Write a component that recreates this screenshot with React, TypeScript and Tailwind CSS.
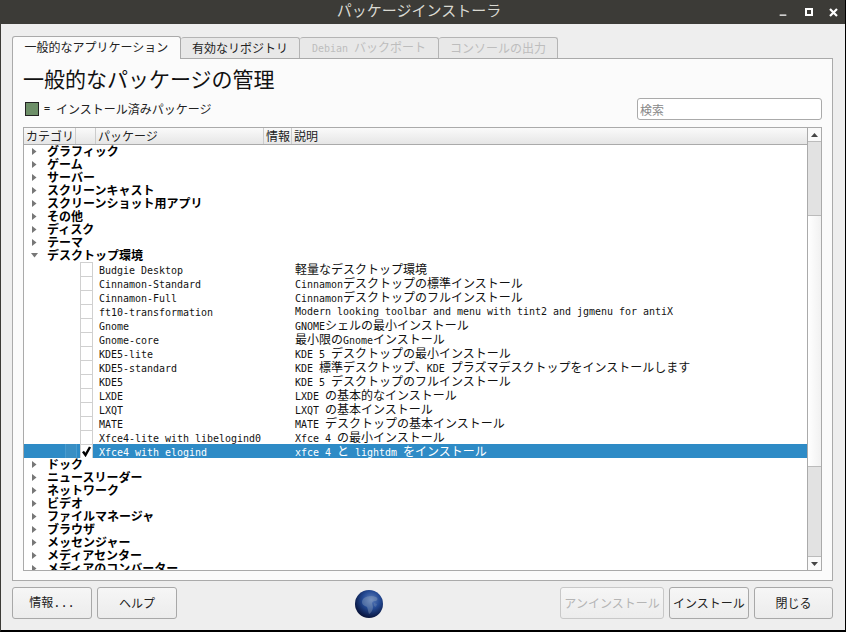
import { Minus } from 'lucide-react';

const FONT = "font-['DejaVu_Sans_Mono','Noto_Sans_CJK_JP',monospace]";

const before = ['グラフィック', 'ゲーム', 'サーバー', 'スクリーンキャスト', 'スクリーンショット用アプリ', 'その他', 'ディスク', 'テーマ'];
const after = ['ドック', 'ニュースリーダー', 'ネットワーク', 'ビデオ', 'ファイルマネージャ', 'ブラウザ', 'メッセンジャー', 'メディアセンター', 'メディアのコンバーター'];

const packages = [
  ['Budgie Desktop', '軽量なデスクトップ環境'],
  ['Cinnamon-Standard', 'Cinnamonデスクトップの標準インストール'],
  ['Cinnamon-Full', 'Cinnamonデスクトップのフルインストール'],
  ['ft10-transformation', 'Modern looking toolbar and menu with tint2 and jgmenu for antiX'],
  ['Gnome', 'GNOMEシェルの最小インストール'],
  ['Gnome-core', '最小限のGnomeインストール'],
  ['KDE5-lite', 'KDE 5 デスクトップの最小インストール'],
  ['KDE5-standard', 'KDE 標準デスクトップ、KDE プラズマデスクトップをインストールします'],
  ['KDE5', 'KDE 5 デスクトップのフルインストール'],
  ['LXDE', 'LXDE の基本的なインストール'],
  ['LXQT', 'LXQT の基本インストール'],
  ['MATE', 'MATE デスクトップの基本インストール'],
  ['Xfce4-lite with libelogind0', 'Xfce 4 の最小インストール'],
];

// latin runs are 10px mono, japanese runs 12px
function Mixed({ text }: { text: string }) {
  const parts = text.split(/([\u3000-\u30ff\u4e00-\u9fff]+)/);
  return (
    <>
      {parts.map((p, i) =>
        i % 2 === 1 ? <span key={i} className="text-[12px]">{p}</span> : <span key={i} className="text-[9.97px]">{p}</span>
      )}
    </>
  );
}

function Category({ name, open }: { name: string; open?: boolean }) {
  return (
    <div className="flex h-[13px] shrink-0 items-center">
      <div className="mr-[3px] flex w-[20px] justify-center">
        {open ? (
          <svg width="9" height="5" viewBox="0 0 9 5"><path d="M1 0h7L4.500 4.500z" fill="#777" /></svg>
        ) : (
          <svg width="5" height="9" viewBox="0 0 5 9"><path d="M0 1v7l4.500-3.500z" fill="#777" /></svg>
        )}
      </div>
      <span className="mt-[2px] text-[12px] leading-[13px] font-bold whitespace-nowrap text-black">{name}</span>
    </div>
  );
}

function PackageRow({ name, desc, selected }: { name: string; desc: string; selected?: boolean }) {
  return (
    <div className={`flex h-[14px] shrink-0 items-start pl-[41px] ${selected ? 'bg-[#2e8bc6] text-white' : 'text-[#111]'}`}>
      <div className={`h-[14px] w-[12px] shrink-0 border-x ${selected ? 'border-[#4b9ccf] bg-[#3a8fc4]' : 'border-transparent'}`} />
      <div className="h-[14px] w-[3px] shrink-0" />
      <div className="flex h-[14px] w-[13px] shrink-0 items-center justify-center border border-b-0 border-[#d0d0d0] bg-white">
        {selected && (
          <svg width="11" height="11" viewBox="0 0 11 11" className="-ml-[1px]"><path d="M2 5.500 4.500 9 9 1" fill="none" stroke="#000" strokeWidth="2.400" /></svg>
        )}
      </div>
      <span className="ml-[6px] w-[196px] shrink-0 pt-[2px] text-[9.97px] leading-[14px] whitespace-nowrap">{name}</span>
      <span className="pt-[2px] text-[9.97px] leading-[12px] whitespace-nowrap"><Mixed text={desc} /></span>
    </div>
  );
}

function Btn({ label, width, disabled, mono }: { label: string; width: string; disabled?: boolean; mono?: boolean }) {
  return (
    <button
      className={`flex h-[32px] ${width} items-center justify-center rounded-[3px] border bg-gradient-to-b from-[#f6f6f6] to-[#ececec] text-[12px] ${disabled ? 'border-[#c8c8c8] text-[#b5b5b5]' : 'border-[#a8a8a8] text-[#222]'} ${mono ? FONT : ''}`}
    >
      {label}
    </button>
  );
}

function Tab({ label, width, active, disabled, mono }: { label: string; width: string; active?: boolean; disabled?: boolean; mono?: boolean }) {
  if (active) {
    return (
      <div className={`relative z-10 -mb-[1px] flex h-[23px] ${width} items-center justify-center rounded-t-[3px] border border-b-0 border-[#aaa] bg-[#fbfbfb] pb-[2px] text-[12px] text-[#222]`}>
        {label}
      </div>
    );
  }
  return (
    <div className={`flex h-[21px] ${width} items-center justify-center rounded-t-[3px] border border-b-0 border-l-0 border-[#b4b4b4] bg-[#e8e8e8] text-[12px] whitespace-nowrap ${disabled ? 'text-[#bdbdbd]' : 'text-[#222]'} ${mono ? FONT : ''}`}>
      {mono ? <span><Mixed text={label} /></span> : label}
    </div>
  );
}

export default function App() {
  return (
    <div className="flex h-[632px] w-[846px] flex-col overflow-hidden border-r border-b-2 border-l border-r-black border-b-black border-l-[#3c3b37] bg-[#eeeeee] font-['Noto_Sans_CJK_JP','Noto_Sans',sans-serif]">
      {/* Title bar */}
      <div className="relative flex h-[24px] shrink-0 items-center justify-center bg-[#3c3b37] pr-[8px] pb-[3px]">
        <span className="text-[15px] text-[#d9d9d2]">パッケージインストーラ</span>
        <div className="absolute top-0 right-0 flex h-[24px] items-center text-white">
          <Minus size={10} strokeWidth={3} className="mt-[5px] mr-[17px]" />
          <div className="mr-[16px] h-[8px] w-[8px] border-2 border-white" />
          <svg className="mr-[7px]" width="9" height="9" viewBox="0 0 9 9"><path d="M1 1l7 7M8 1L1 8" stroke="#fff" strokeWidth="2.200" /></svg>
        </div>
      </div>

      <div className="flex min-h-0 flex-1 flex-col pt-[12px] pr-[12px] pl-[11px]">
        {/* Tabs */}
        <div className="flex h-[22px] shrink-0 items-end">
          <Tab label="一般的なアプリケーション" width="w-[169px]" active />
          <Tab label="有効なリポジトリ" width="w-[119px]" />
          <Tab label="Debian バックポート" width="w-[139px]" disabled mono />
          <Tab label="コンソールの出力" width="w-[119px]" disabled />
        </div>

        {/* Panel */}
        <div className="flex h-[523px] shrink-0 flex-col border border-[#aaa] bg-[#fbfbfb] px-[10px]">
          <div className="flex h-[68px] shrink-0 items-end justify-between pb-[7px]">
            <div className="mb-[4px]">
              <h1 className="text-[21px] leading-[30px] font-normal text-[#111]">一般的なパッケージの管理</h1>
              <div className="mt-[9px] flex h-[14px] items-center pl-[2px]">
                <div className="h-[14px] w-[14px] border border-[#222] bg-[#6d8f68]" />
                <span className={`ml-[5px] text-[10px] leading-[14px] text-[#222] ${FONT}`}>=</span>
                <span className="ml-[6px] text-[12px] leading-[14px] text-[#222]">インストール済みパッケージ</span>
              </div>
            </div>
            <input
              placeholder="検索"
              className="h-[22px] w-[185px] rounded-[3px] border border-[#aaa] bg-white px-[2px] text-[12px] outline-none placeholder:text-[#888]"
            />
          </div>

          {/* Tree */}
          <div className="flex h-[444px] shrink-0 border border-[#aaa] bg-white">
            <div className={`flex min-w-0 flex-1 flex-col overflow-hidden ${FONT}`}>
              <div className="flex h-[17px] shrink-0 items-center border-b border-[#aaa] bg-gradient-to-b from-[#fafafa] to-[#e6e6e6] font-['Noto_Sans_CJK_JP',sans-serif] text-[12px] text-[#222]">
                <div className="h-full w-[52px] border-r border-[#ccc] pl-[2px] leading-[16px]">カテゴリ</div>
                <div className="h-full w-[20px] border-r border-[#ccc]" />
                <div className="h-full w-[168px] border-r border-[#ccc] pl-[2px] leading-[16px]">パッケージ</div>
                <div className="h-full w-[28px] border-r border-[#ccc] pl-[2px] leading-[16px]">情報</div>
                <div className="h-full pl-[2px] leading-[16px]">説明</div>
              </div>
              <div className="flex min-h-0 flex-1 flex-col overflow-hidden">
                {before.map((c) => <Category key={c} name={c} />)}
                <Category name="デスクトップ環境" open />
                {packages.map(([n, d]) => <PackageRow key={n} name={n} desc={d} />)}
                <PackageRow name="Xfce4 with elogind" desc="xfce 4 と lightdm をインストール" selected />
                {after.map((c) => <Category key={c} name={c} />)}
              </div>
            </div>

            {/* Scrollbar: the trough is the darker part, the handle the light one */}
            <div className="flex w-[14px] shrink-0 flex-col border-l border-[#aaa] bg-[#e2e2e2]">
              <div className="flex h-[14px] shrink-0 items-center justify-center border-b border-[#bbb] bg-[#f9f9f9]">
                <svg width="7" height="4" viewBox="0 0 7 4"><path d="M3.500 0 7 4H0z" fill="#444" /></svg>
              </div>
              <div className="h-[73px] shrink-0" />
              <div className="h-[252px] shrink-0 border-y border-[#bbb] bg-gradient-to-r from-[#ffffff] to-[#f1f1f1]" />
              <div className="flex-1" />
              <div className="flex h-[14px] shrink-0 items-center justify-center border-t border-[#bbb] bg-[#f9f9f9]">
                <svg width="7" height="4" viewBox="0 0 7 4"><path d="M0 0h7L3.500 4z" fill="#444" /></svg>
              </div>
            </div>
          </div>
        </div>

        {/* Buttons */}
        <div className="flex flex-1 items-start pt-[6px]">
          <div className="flex gap-[5px]">
            <Btn label="情報..." width="w-[80px]" mono />
            <Btn label="ヘルプ" width="w-[80px]" />
          </div>
          <div className="flex flex-1 justify-center pt-[3px]">
            <svg width="28" height="28" viewBox="0 0 28 28">
              <defs>
                <radialGradient id="globe" cx="58%" cy="35%" r="70%">
                  <stop offset="0" stopColor="#5f80bc" />
                  <stop offset="0.45" stopColor="#244a94" />
                  <stop offset="0.85" stopColor="#0c1c4a" />
                  <stop offset="1" stopColor="#081030" />
                </radialGradient>
              </defs>
              <circle cx="14" cy="14" r="14" fill="url(#globe)" />
              {/* land masses */}
              <path d="M9 8c3-2 8-3 12-1 2 1 2 3 0 4-2 0-3 0-4 2l1 4c0 3-2 6-4 7-1-2-1-5-2-7-2-1-5-2-5-5 0-2 1-3 2-4z" fill="#a9b8c4" opacity="0.32" />
              <path d="M19 13l3 1-1 3-2-1z" fill="#a9b8c4" opacity="0.2" />
            </svg>
          </div>
          <div className="flex gap-[5px]">
            <Btn label="アンインストール" width="w-[104px]" disabled />
            <Btn label="インストール" width="w-[80px]" />
            <Btn label="閉じる" width="w-[79px]" />
          </div>
        </div>
      </div>
    </div>
  );
}
